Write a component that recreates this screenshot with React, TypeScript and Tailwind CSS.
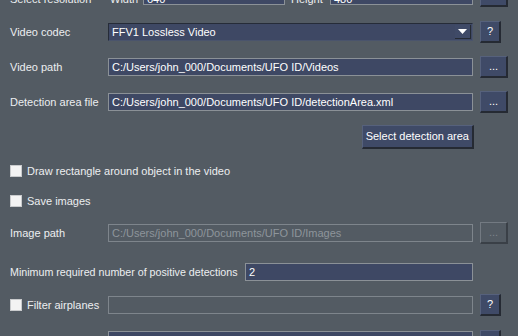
import React from "react";

const FONT = { fontFamily: '"Liberation Sans", Arial, sans-serif' };

function Field({ value, disabled = false, className = "" }: { value?: string; disabled?: boolean; className?: string }) {
  return (
    <div
      className={
        "h-[18px] flex items-center px-[3px] border whitespace-nowrap overflow-hidden text-[11px] leading-none " +
        (disabled
          ? "bg-[#535b63] border-[#7e858c] text-[#8e959b] "
          : "bg-[#3e4864] border-[#8b9197] text-white ") +
        className
      }
    >
      {value}
    </div>
  );
}

function Btn({ label, w, disabled = false }: { label: string; w: string; disabled?: boolean }) {
  return (
    <div
      className={
        "h-[22px] flex items-center justify-center text-[11px] leading-none border-t border-l border-r-2 border-b-2 " +
        w +
        (disabled
          ? " bg-[#535b63] border-t-[#737a82] border-l-[#737a82] border-r-[#3a4047] border-b-[#3a4047] text-[#7d848b]"
          : " bg-[#3f4a67] border-t-[#56617c] border-l-[#56617c] border-r-[#252a33] border-b-[#252a33] text-white")
      }
    >
      {label}
    </div>
  );
}

function Check({ label }: { label: string }) {
  return (
    <div className="flex items-center">
      <div className="w-[12px] h-[12px] bg-[#f3f3f3] border border-[#c9cbcd]" />
      <span className="ml-[5px] text-[11px] text-[#eceef0] whitespace-nowrap">{label}</span>
    </div>
  );
}

export default function App() {
  return (
    <div className="w-[518px] h-[336px] overflow-hidden bg-[#535b63]" style={FONT}>
      <div className="-mt-[15px] pl-[10px] pr-[10px] text-[11px] text-[#eceef0]">
        {/* Row 0: resolution */}
        <div className="h-[22px] flex items-center">
          <div className="w-[100px] whitespace-nowrap pt-[6px]">Select resolution</div>
          <div className="w-[33px] whitespace-nowrap pt-[6px]">Width</div>
          <Field value="640" className="w-[142px] pt-[6px]" />
          <div className="w-[45px] pl-[6px] whitespace-nowrap pt-[6px]">Height</div>
          <Field value="480" className="w-[143px] pt-[6px]" />
          <div className="ml-[7px]">
            <Btn label="..." w="w-[28px]" />
          </div>
        </div>

        {/* Row 1: Video codec */}
        <div className="mt-[14px] h-[22px] flex items-center">
          <div className="w-[98px] whitespace-nowrap">Video codec</div>
          <div className="flex-1 h-[18px] flex items-center bg-[#3e4864] border-t border-l border-t-[#262c38] border-l-[#262c38] border-b border-r border-b-[#4a546c] border-r-[#4a546c] pl-[3px] pr-[1px] text-white">
            <span className="flex-1 whitespace-nowrap">FFV1 Lossless Video</span>
            <div className="w-[16px] h-[14px] bg-[#3f4a67] border-r border-b border-r-[#252a33] border-b-[#252a33] flex items-center justify-center">
              <svg width="9" height="5" viewBox="0 0 9 5">
                <polygon points="0,0 9,0 4.5,5" fill="#ffffff" />
              </svg>
            </div>
          </div>
          <div className="ml-[7px] w-[28px]">
            <Btn label="?" w="w-[21px]" />
          </div>
        </div>

        {/* Row 2: Video path */}
        <div className="mt-[13px] h-[22px] flex items-center">
          <div className="w-[98px] whitespace-nowrap">Video path</div>
          <Field value="C:/Users/john_000/Documents/UFO ID/Videos" className="flex-1" />
          <div className="ml-[7px]">
            <Btn label="..." w="w-[28px]" />
          </div>
        </div>

        {/* Row 3: Detection area file */}
        <div className="mt-[13px] h-[22px] flex items-center">
          <div className="w-[98px] whitespace-nowrap">Detection area file</div>
          <Field value="C:/Users/john_000/Documents/UFO ID/detectionArea.xml" className="flex-1" />
          <div className="ml-[7px]">
            <Btn label="..." w="w-[28px]" />
          </div>
        </div>

        {/* Row 4: Select detection area button */}
        <div className="mt-[12px] h-[24px] flex justify-end pr-[34px]">
          <div className="h-[24px] px-[3px] flex items-center bg-[#3f4a67] border-t border-l border-r-2 border-b-2 border-t-[#56617c] border-l-[#56617c] border-r-[#252a33] border-b-[#252a33] text-white whitespace-nowrap">
            Select detection area
          </div>
        </div>

        {/* Checkbox rows */}
        <div className="mt-[11px] h-[22px] flex items-center">
          <Check label="Draw rectangle around object in the video" />
        </div>
        <div className="mt-[8px] h-[22px] flex items-center">
          <Check label="Save images" />
        </div>

        {/* Image path (disabled) */}
        <div className="mt-[10px] h-[22px] flex items-center">
          <div className="w-[98px] whitespace-nowrap">Image path</div>
          <Field value="C:/Users/john_000/Documents/UFO ID/Images" disabled className="flex-1" />
          <div className="ml-[7px]">
            <Btn label="..." w="w-[28px]" disabled />
          </div>
        </div>

        {/* Minimum required */}
        <div className="mt-[17px] h-[22px] flex items-center">
          <div className="w-[235px] whitespace-nowrap text-[10.7px]">Minimum required number of positive detections</div>
          <Field value="2" className="flex-1" />
          <div className="ml-[7px] w-[28px]" />
        </div>

        {/* Filter airplanes */}
        <div className="mt-[11px] h-[22px] flex items-center">
          <div className="w-[98px]">
            <Check label="Filter airplanes" />
          </div>
          <Field disabled className="flex-1" />
          <div className="ml-[7px] w-[28px]">
            <Btn label="?" w="w-[21px]" />
          </div>
        </div>

        {/* Last (cut) row */}
        <div className="mt-[14px] h-[22px] flex items-start">
          <div className="w-[98px]" />
          <div className="flex-1 mt-[1px] h-[18px] bg-[#3e4864] border border-[#8b9197]" />
          <div className="ml-[7px] w-[28px]">
            <Btn label="" w="w-[21px]" />
          </div>
        </div>
      </div>
    </div>
  );
}
